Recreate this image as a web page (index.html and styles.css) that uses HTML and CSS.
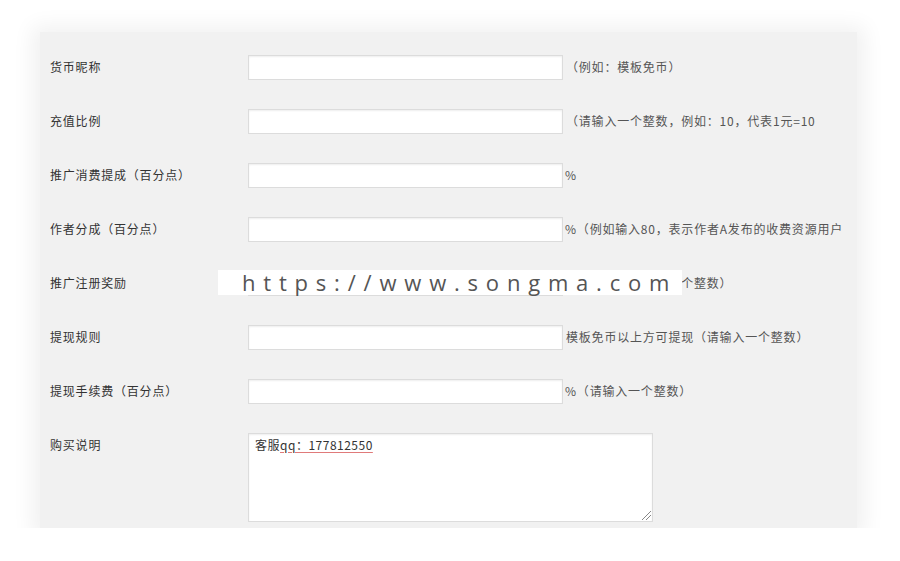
FILE: index.html
```html
<!DOCTYPE html>
<html lang="zh-CN">
<head>
<meta charset="utf-8">
<title>设置</title>
<link rel="stylesheet" href="styles.css">
</head>
<body>
<div class="panel">
  <div class="row">
    <div class="label">货币昵称</div>
    <div class="field"><input class="inp" type="text"><span class="help">（例如：模板免币）</span></div>
  </div>
  <div class="row">
    <div class="label">充值比例</div>
    <div class="field"><input class="inp" type="text"><span class="help">（请输入一个整数，例如：10，代表1元=10</span></div>
  </div>
  <div class="row">
    <div class="label">推广消费提成（百分点）</div>
    <div class="field"><input class="inp" type="text"><span class="help pct">%</span></div>
  </div>
  <div class="row">
    <div class="label">作者分成（百分点）</div>
    <div class="field"><input class="inp" type="text"><span class="help pct">%（例如输入80，表示作者A发布的收费资源用户</span></div>
  </div>
  <div class="row wm-row">
    <div class="label">推广注册奖励</div>
    <div class="field"><input class="inp" type="text"><span class="help">模板免币（请输入一个整数）</span></div>
    <div class="watermark">https://www.songma.com</div>
  </div>
  <div class="row">
    <div class="label">提现规则</div>
    <div class="field"><input class="inp" type="text"><span class="help">模板免币以上方可提现（请输入一个整数）</span></div>
  </div>
  <div class="row">
    <div class="label">提现手续费（百分点）</div>
    <div class="field"><input class="inp" type="text"><span class="help pct">%（请输入一个整数）</span></div>
  </div>
  <div class="row area-row">
    <div class="label">购买说明</div>
    <div class="field"><div class="ta"><span class="ta-text">客服<span class="spell">qq：177812550</span></span><span class="grip"></span></div></div>
  </div>
</div>
</body>
</html>
```

FILE: styles.css
```css
html, body {
  margin: 0;
  padding: 0;
  background: #ffffff;
}
body {
  font-family: "Noto Sans CJK SC", "Noto Sans", sans-serif;
  font-size: 12px;
  color: #333;
}
.panel {
  margin: 32px 43px 0 40px;
  height: 496px;
  box-sizing: border-box;
  padding: 8px 0 0 10px;
  background: #f1f1f1;
  box-shadow: 0 2px 20px 8px rgba(0, 0, 0, 0.06);
  overflow: hidden;
}
.row {
  display: flex;
  align-items: center;
  height: 54px;
  position: relative;
}
.label {
  width: 198px;
  flex: none;
  color: #333;
  line-height: 16px;
  letter-spacing: 0.8px;
}
.field {
  display: flex;
  align-items: center;
  white-space: nowrap;
}
.inp {
  display: block;
  width: 315px;
  height: 25px;
  box-sizing: border-box;
  margin: 0;
  border: 1px solid #dcdcdc;
  background: #fff;
  box-shadow: inset 0 1px 2px rgba(0, 0, 0, 0.07);
  outline: none;
  padding: 0 6px;
}
.help {
  margin-left: 3px;
  color: #555;
  line-height: 16px;
  letter-spacing: 0.8px;
}
.help.pct {
  margin-left: 2px;
}
.watermark {
  position: absolute;
  left: 168px;
  top: 14px;
  width: 464px;
  height: 25px;
  background: #fff;
  box-sizing: border-box;
  padding-left: 24px;
  font-family: "Open Sans", "DejaVu Sans", sans-serif;
  font-size: 22px;
  line-height: 25px;
  letter-spacing: 7.8px;
  color: #555;
  white-space: nowrap;
}
.area-row {
  height: auto;
  align-items: flex-start;
  padding-top: 15px;
}
.area-row .label {
  padding-top: 4px;
}
.ta {
  position: relative;
  width: 405px;
  height: 89px;
  box-sizing: border-box;
  border: 1px solid #dcdcdc;
  background: #fff;
  box-shadow: inset 0 1px 2px rgba(0, 0, 0, 0.07);
  padding: 3px 6px;
  line-height: 16px;
  color: #333;
  letter-spacing: 0.5px;
}
.spell {
  text-decoration: underline;
  text-decoration-color: #e07a7a;
  text-underline-offset: 2px;
}
.grip {
  position: absolute;
  right: 1px;
  bottom: 1px;
  width: 9px;
  height: 9px;
  background: linear-gradient(135deg, transparent 45%, #888 45%, #888 52%, transparent 52%, transparent 70%, #888 70%, #888 77%, transparent 77%);
}
```
